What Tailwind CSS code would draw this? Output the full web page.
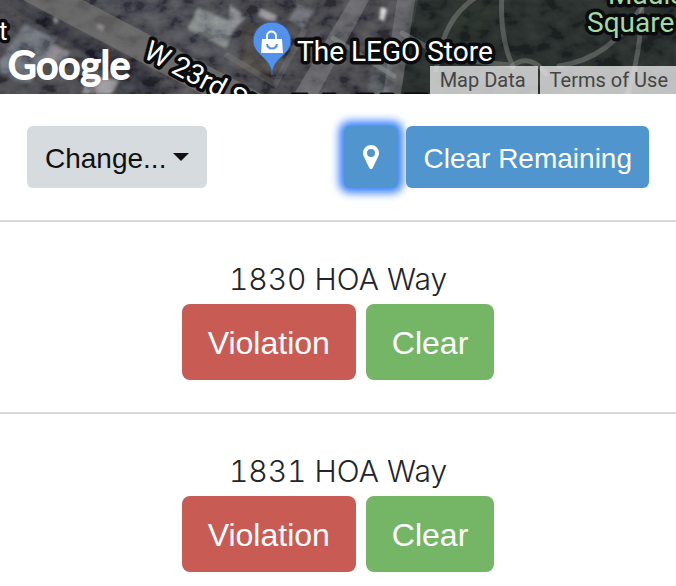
<!DOCTYPE html>
<html lang="en">
<head>
<meta charset="utf-8">
<meta name="viewport" content="width=device-width, initial-scale=1">
<title>Property Inspection</title>
<script src="https://cdn.jsdelivr.net/npm/@tailwindcss/browser@4"></script>
</head>
<body class="bg-white font-['Liberation_Sans',Arial,sans-serif] text-[#212529]">
<header class="relative h-[94px] overflow-hidden bg-[#3b3b3e]">
  <svg class="block h-full w-full" viewBox="0 0 676 94" preserveAspectRatio="xMidYMid slice" role="img" aria-label="Satellite map">
    <defs>
      <filter id="grain" x="0" y="0" width="100%" height="100%">
        <feTurbulence type="fractalNoise" baseFrequency="0.05 0.07" numOctaves="4" seed="8"/>
        <feColorMatrix values="1 0 0 0 -0.31  1 0 0 0 -0.31  1 0 0 0 -0.28  0 0 0 0 1"/>
      </filter>
      <filter id="soft" x="-10%" y="-10%" width="120%" height="120%"><feGaussianBlur stdDeviation="1.6"/></filter>
    </defs>
    <rect width="676" height="94" fill="#3c3c40"/>
    <g filter="url(#soft)">
      <path d="M24 24l32 15-25 45-31-8V60z" fill="#6b6f77"/>
      <path d="M52 43l18 9-9 15-18-9z" fill="#88868a"/>
      <path d="M88 76l30 4-4 14H82z" fill="#a3a1a2"/>
      <path d="M88 0h150v74z" fill="#434349"/>
      <path d="M198 8l38 16-10 24-38-19z" fill="#8b9391"/>
      <path d="M0 0h22l130 70-10 24-72-50z" fill="#27282d"/>
      <path d="M130 68l40 20v6h-60z" fill="#2b2c33"/>
      <path d="M230 4l16 14-16 14zM260 8l18 8-4 6-16-6z" fill="#94949a"/>
      <path d="M297 4l18 6-12 18-14-8z" fill="#75757b"/>
      <path d="M244 24l50 8-22 50-34-12z" fill="#3c3833"/>
      <path d="M381 7l6 2-3 12-5-2z" fill="#f0eded"/>
      <path d="M98 24l7 3-2 4-6-3zM54 16l4 4-3 3z" fill="#c0bdbd"/>
      <path d="M412 0h264v94H394z" fill="#232925"/>
      <path d="M455 0l36 8-6 30-35-12z" fill="#263028"/>
      <path d="M373 54l18 6-4 34h-20z" fill="#4f5558"/>
    </g>
    <rect width="676" height="94" filter="url(#grain)" opacity=".25"/>
    <path d="M418 0h258v94H400z" fill="#1d241f" opacity=".5"/>
    <path d="M23 0h60l190 100h-60z" fill="#7d7b78" opacity=".6"/>
    <path d="M350 0h19l-51 94h-24z" fill="#98989b" opacity=".38"/>
    <path d="M397 0h18l-14 94h-18z" fill="#98989b" opacity=".33"/>
    <path d="M225 54l50 30 30-55" fill="none" stroke="#8b8b8d" stroke-opacity=".28" stroke-width="6"/>
    <g fill="none" stroke="#a5a8a6" stroke-opacity=".35" stroke-width="5" stroke-linecap="round">
      <path d="M333 38l61 38M402 33l34 19"/>
      <path d="M478-4c-24 15-36 36-42 74M502-5c-2 28 1 50 11 72M470 61l40 4"/>
      <path d="M642 6c-22 36-48 55-83 60"/>
      <path d="M642 6c-1 34-5 60-15 90M512 66c12-10 25-5 34 8"/>
    </g>
    <g font-family="Roboto, sans-serif" stroke="#090b0c" stroke-width="7" stroke-linejoin="round" paint-order="stroke">
      <text x="-1" y="40" fill="#fff" font-size="26">t</text>
      <text transform="translate(142 57) rotate(28)" fill="#fff" font-size="28">W 23rd St</text>
      <text x="297" y="61" fill="#fff" font-size="28">The LEGO Store</text>
      <text x="608" y="4" fill="#a3d9a4" font-size="28">Madison</text>
      <text x="587" y="32" fill="#a3d9a4" font-size="28">Square</text>
    </g>
    <path d="M292 94h15m16 0h12m22 0h16m8 0h12m12 0h22" stroke="#090b0c" stroke-width="3" stroke-linecap="round" fill="none"/>
    <path d="M272 75c-1-18-19-20-19-34a19 19 0 0 1 38 0c0 14-18 16-19 34z" fill="#5491ea" stroke="#385f98"/>
    <path d="M262 39h20l1 14h-22z" fill="#fff"/>
    <path d="M267 40v-4c0-6 9-6 9 0v4" fill="none" stroke="#fff" stroke-width="2"/>
    <path d="M267 44c1 6 9 6 10 0" fill="none" stroke="#5491ea" stroke-width="2"/>
    <text x="8" y="79" fill="#fff" stroke="#fff" stroke-width="2" font-family="Lato, sans-serif" font-weight="400" font-size="39">Google</text>
  </svg>
  <nav class="absolute right-0 bottom-0 flex h-7 gap-[2px] font-[Roboto,sans-serif] text-xl leading-7 text-[#444]" aria-label="Map information">
    <a href="#data" class="bg-[#e6e6e6]/80 pr-3 pl-[10px]">Map Data</a>
    <a href="#terms" class="bg-[#e6e6e6]/80 pr-2 pl-[10px]">Terms of Use</a>
  </nav>
</header>
<main>
  <div class="flex items-center justify-between border-b-2 border-[#d6d9da] px-[27px] py-8">
    <div class="relative">
      <select aria-label="Change" class="h-[62px] w-[180px] appearance-none rounded-md bg-[#d6dbdf] pt-[3px] pl-[18px] text-[28px] text-[#111]">
        <option>Change...</option>
      </select>
      <svg class="pointer-events-none absolute top-[27px] right-[18px] h-2 w-4" viewBox="0 0 16 8" aria-hidden="true"><path d="M0 0h16L8 8z" fill="#111"/></svg>
    </div>
    <div class="flex gap-2">
      <button type="button" aria-label="Show location" class="flex h-[62px] w-[54px] items-center justify-center rounded-md bg-[#5095cd] shadow-[0_0_8px_5px_#3b82ff]">
        <svg class="h-6 w-4" viewBox="0 0 16 24" aria-hidden="true"><path fill="#fff" fill-rule="evenodd" d="M8 0a8 8 0 0 0-8 8c0 1.3.2 2.3.7 3.2l5.6 11.7c.7 1.5 2.7 1.5 3.4 0l5.6-11.7c.5-.9.7-1.9.7-3.2a8 8 0 0 0-8-8zm0 4a4 4 0 1 1 0 8 4 4 0 0 1 0-8z"/></svg>
      </button>
      <button type="button" class="relative h-[62px] rounded-md bg-[#5095cd] px-[17px] pt-[3px] text-[28px] text-white">Clear Remaining</button>
    </div>
  </div>
  <section class="flex flex-col items-center border-b-2 border-[#d6d9da] pt-9 pb-8">
    <h2 class="pb-1 font-[Inter,sans-serif] text-[30px] leading-[42px] font-light tabular-nums">1830 HOA Way</h2>
    <div class="flex gap-[10px]">
      <button type="button" class="h-[76px] rounded-lg bg-[#c85c55] px-[26px] pt-[2px] text-[32px] text-white">Violation</button>
      <button type="button" class="h-[76px] rounded-lg bg-[#74b566] px-[26px] pt-[2px] text-[32px] text-white">Clear</button>
    </div>
  </section>
  <section class="flex flex-col items-center pt-9">
    <h2 class="pb-1 font-[Inter,sans-serif] text-[30px] leading-[42px] font-light tabular-nums">1831 HOA Way</h2>
    <div class="flex gap-[10px]">
      <button type="button" class="h-[76px] rounded-lg bg-[#c85c55] px-[26px] pt-[2px] text-[32px] text-white">Violation</button>
      <button type="button" class="h-[76px] rounded-lg bg-[#74b566] px-[26px] pt-[2px] text-[32px] text-white">Clear</button>
    </div>
  </section>
</main>
</body>
</html>
